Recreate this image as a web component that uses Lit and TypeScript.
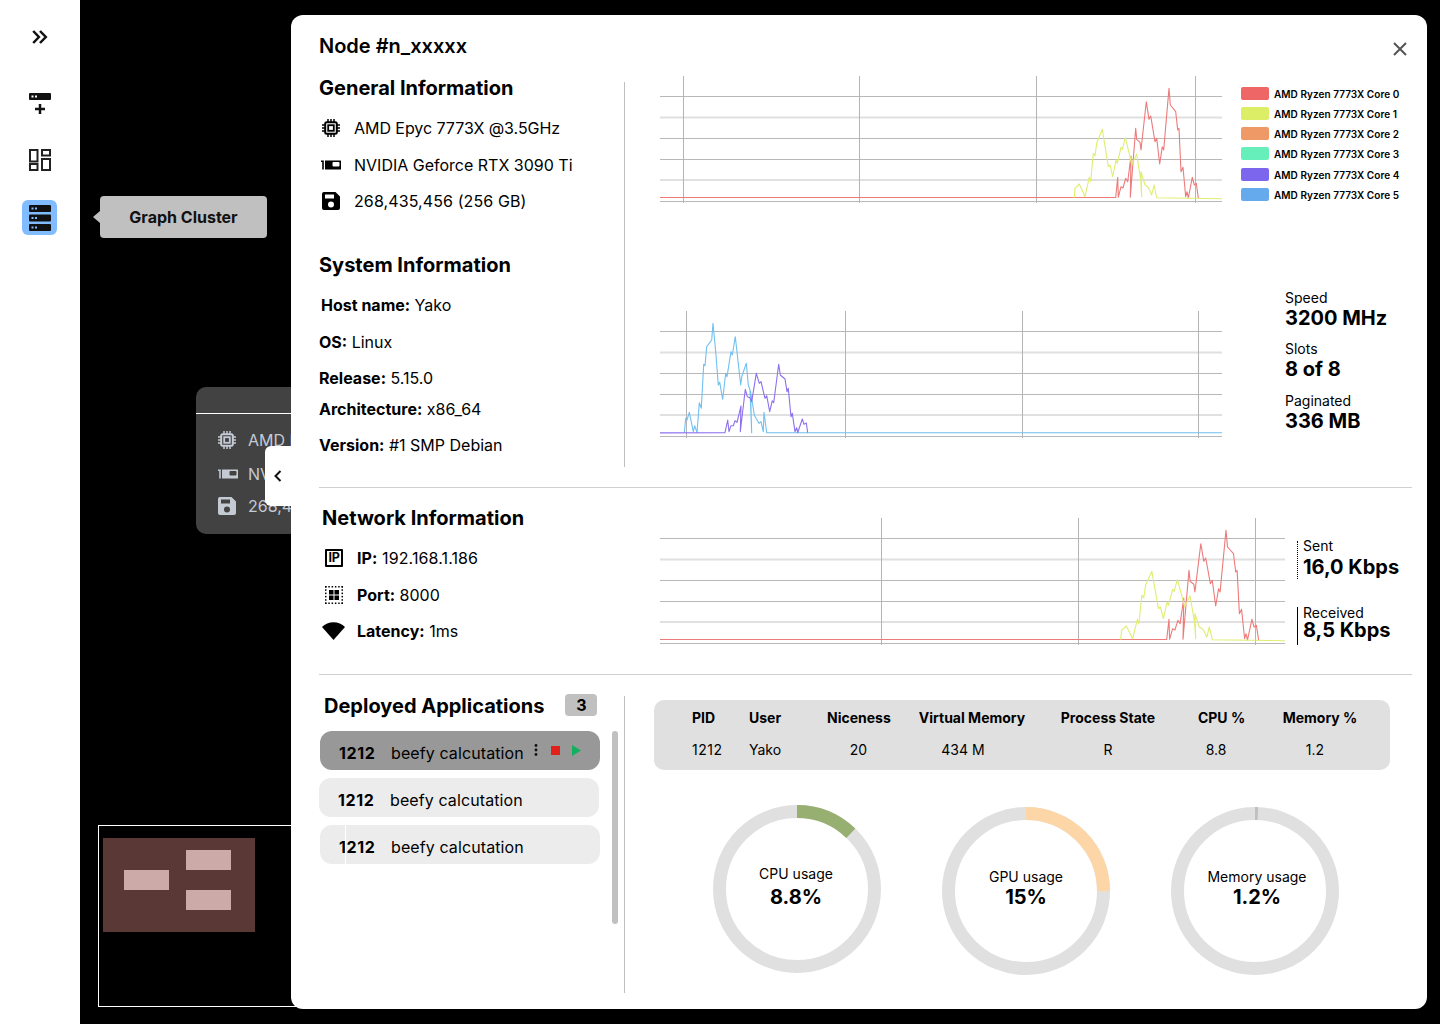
import { LitElement, html, css, svg } from "lit";
import { customElement } from "lit/decorators.js";

type Pt = [number, number];
const RED: Pt[] = [[660,197.5],[1115.7,197.5],[1117.7,177.3],[1118.3,197.3],[1121,186.7],[1123,188],[1125.7,178.3],[1127.7,181.7],[1131,156],[1130.3,197.3],[1135.7,128.3],[1136.7,139.3],[1140,142.3],[1141,150],[1146.3,101.7],[1149,119.3],[1150.7,116],[1155,141.7],[1156.7,138.3],[1159.7,164],[1162.3,146.7],[1163.7,150],[1169,88.3],[1170.3,105],[1175.7,111.7],[1177.7,130],[1179,128.3],[1181,171.7],[1183,167.3],[1185.7,196.7],[1187,191.7],[1188.3,198],[1192.3,177.3],[1194.3,185],[1196.3,183.3],[1198.3,198]];
const YELLOW: Pt[] = [[1074.3,197.7],[1075,188.3],[1079.3,184],[1083.3,192.7],[1085,196.7],[1089.3,177.3],[1090.7,181.7],[1093.3,153.3],[1095,156],[1096.7,143.3],[1102.3,129.3],[1108.3,166.7],[1110,165],[1112.7,176.7],[1116,160],[1117.3,163.3],[1121,147.3],[1122.3,149.3],[1125.3,137.7],[1130,156.7],[1131.7,165],[1136.7,154],[1140.7,180],[1141.7,196.7],[1141,171.7],[1145,185],[1148.3,187.3],[1151.7,195],[1154,185],[1156.7,197.7],[1222,198.7]];
const BLUE: Pt[] = [[684.3,432.7],[685.7,418.3],[687,420],[689.3,412.3],[693.3,431.7],[694.7,425.7],[697,432.7],[699.3,402.7],[701.3,408.3],[703.7,364.3],[705,365.7],[706.7,346.7],[711.7,340],[713,323.3],[715.7,351.7],[718.3,385],[719.7,382.3],[722.7,399.3],[725.7,373.3],[727,376.7],[731,351.7],[732.3,355],[735.3,336.7],[740.7,385],[741.7,376.7],[746.3,363.3],[748.3,385],[750,390],[751.7,432.7],[750.5,391],[754.3,415],[756,418.3],[759,423.3],[761,421.7],[763.3,431.7],[764,412.3],[766.7,432.7],[1222,432.7]];
const PURPLE: Pt[] = [[660,432.9],[725,432.7],[727.7,420],[729,431.7],[731,425.7],[733.3,425.7],[735,420.7],[737,422.3],[741,406],[740.3,431.7],[745.3,389.3],[747.3,396.7],[750,397.7],[751.7,401.7],[756.3,373.3],[759.3,383.3],[761,381.7],[765,398.3],[766.7,395.7],[769.7,411.7],[772.3,400.7],[773.7,402.7],[778.7,364.3],[780.3,375],[785,379],[787,391.7],[788.3,388.3],[791,416.7],[792.3,413.3],[795,431.7],[796.7,427.7],[797.7,432.7],[802.3,419],[804,424.3],[806.3,423],[807.7,432.7]];

interface ChartDef { w: number; vs: number[]; series: { pts: Pt[]; color: string; sx?: number }[] }

const pointsOf = (pts: Pt[], sx: number, yBase: number) =>
  pts.map(([x, y]) => `${((x - 660) * sx).toFixed(1)},${(y - yBase).toFixed(1)}`).join(" ");

function chart(def: ChartDef, yBase: number) {
  const hs = [20.5, 41.5, 62.5, 83.5, 104, 125.5];
  const light = new Set([41.5, 104]);
  return html`<svg class="chart" width=${def.w} height="127" viewBox="0 0 ${def.w} 127">
    ${hs.map(y => svg`<line x1="0" x2=${def.w} y1=${y} y2=${y} stroke=${light.has(y) ? "#e0e0e0" : "#b8b8b8"} stroke-width=${light.has(y) ? 2 : 1}></line>`)}
    ${def.vs.map(x => svg`<line x1=${x} x2=${x} y1="0" y2="127" stroke="#b4b4b4" stroke-width="1"></line>`)}
    ${def.series.map(s => svg`<polyline fill="none" stroke=${s.color} stroke-width="1.1" stroke-linejoin="round" points=${pointsOf(s.pts, s.sx ?? 1, yBase)}></polyline>`)}
  </svg>`;
}

const iconCpu = html`<svg class="ic" width="18" height="18" viewBox="0 0 18 18" fill="none" stroke="currentColor"><rect x="3.2" y="3.2" width="11.6" height="11.6" rx="1.5" stroke-width="2"></rect><rect x="6.2" y="6.2" width="5.6" height="5.6" stroke-width="1.8"></rect><path d="M6 0v3M9 0v3M12 0v3M6 15v3M9 15v3M12 15v3M0 6h3M0 9h3M0 12h3M15 6h3M15 9h3M15 12h3" stroke-width="1.5"></path></svg>`;
const iconGpu = html`<svg class="ic" width="20" height="10" viewBox="0 0 20 10"><path fill="currentColor" fill-rule="evenodd" d="M0 .5h2.800v9H1.200V2H0zM4 .5h15.500a.5.5 0 0 1 .5.5v8.500H4zM12.500 2a1 1 0 0 0-1 1v2.500a1 1 0 0 0 1 1h5a1 1 0 0 0 1-1V3a1 1 0 0 0-1-1z"></path></svg>`;
const iconSave = html`<svg class="ic" width="18" height="18" viewBox="0 0 18 18"><path fill="currentColor" fill-rule="evenodd" d="M2 0h11.500L18 4.500V16a2 2 0 0 1-2 2H2a2 2 0 0 1-2-2V2a2 2 0 0 1 2-2zM3 2.500v4h9v-4zM9 9.500a3 3 0 1 0 0 6 3 3 0 0 0 0-6z"></path></svg>`;
const iconPort = html`<svg width="18" height="18" viewBox="0 0 18 18" fill="#000"><g>
  ${[0,1,2,3,4,5].flatMap(n => { const i = n * 3.3; return [svg`<rect x=${i} y="0" width="1.500" height="1.500"></rect>`, svg`<rect x=${i} y="16.500" width="1.500" height="1.500"></rect>`, svg`<rect x="0" y=${i} width="1.500" height="1.500"></rect>`, svg`<rect x="16.500" y=${i} width="1.500" height="1.500"></rect>`]; })}
  <rect x="4" y="4" width="4.500" height="4.500"></rect><rect x="9.500" y="4" width="4.500" height="4.500"></rect><rect x="4" y="9.500" width="4.500" height="4.500"></rect><rect x="9.500" y="9.500" width="4.500" height="4.500"></rect></g></svg>`;
const iconWifi = html`<svg width="23" height="18" viewBox="0 0 23 18"><path fill="#000" d="M11.500 18 0 5C3 2 7 .3 11.500 .3S20 2 23 5z"></path></svg>`;

const srv = (y: number, fill: string, dot: string) => svg`<rect x="0" y=${y} width="22" height="7" rx="1" fill=${fill}></rect><rect x="2.500" y=${y + 2.500} width="2" height="2" fill=${dot}></rect><rect x="6" y=${y + 2.500} width="2" height="2" fill=${dot}></rect>`;

const LEGEND: [string, string][] = [
  ["#ee6666", "AMD Ryzen 7773X Core 0"], ["#dcee66", "AMD Ryzen 7773X Core 1"], ["#ee9966", "AMD Ryzen 7773X Core 2"],
  ["#66eebb", "AMD Ryzen 7773X Core 3"], ["#7d66ee", "AMD Ryzen 7773X Core 4"], ["#66aaee", "AMD Ryzen 7773X Core 5"],
];

const gauge = (pct: number, color: string) => {
  const r = 77.5, c = 2 * Math.PI * r;
  return html`<svg class="ring" width="168" height="168" viewBox="0 0 168 168">
    <circle cx="84" cy="84" r=${r} fill="none" stroke="#e0e0e0" stroke-width="13"></circle>
    <circle cx="84" cy="84" r=${r} fill="none" stroke=${color} stroke-width="13" stroke-dasharray="${c * pct} ${c}" transform="rotate(-90 84 84)"></circle>
  </svg>`;
};

const RED_Y = 76, BLUE_Y = 311;

@customElement("app-root")
export class AppRoot extends LitElement {
  static styles = css`
    :host { display: flex; width: 1440px; height: 1024px; overflow: hidden; background: #000; font-family: Inter, "Liberation Sans", sans-serif; color: #000; font-size: 16px; line-height: 20px; }
    .side { width: 80px; background: #fff; display: flex; flex-direction: column; align-items: center; flex: none; }
    .sbtn { display: flex; align-items: center; justify-content: center; }
    .s1 { margin-top: 27px; height: 20px; }
    .s2 { margin-top: 46px; height: 22px; }
    .s3 { margin-top: 34px; height: 22px; }
    .s4 { margin-top: 29px; margin-left: -1px; width: 35px; height: 35px; border-radius: 6px; background: #80bcff; padding-left: 1px; box-sizing: border-box; }
    .canvas { position: relative; flex: 1; }
    .tip { position: absolute; left: 20px; top: 196px; width: 167px; height: 42px; background: #c0c0c0; border-radius: 4px; display: flex; align-items: center; justify-content: center; font-weight: 700; color: #111; }
    .tip::before { content: ""; position: absolute; left: -7px; top: 15px; border: 6px solid transparent; border-left: 0; border-right: 7px solid #c0c0c0; }
    .node { position: absolute; left: 116px; top: 387px; width: 110px; height: 147px; background: #424242; border-radius: 10px 0 0 10px; color: #c4cad4; overflow: hidden; }
    .node-head { height: 26px; border-bottom: 1px solid #fff; }
    .node-row { position: absolute; left: 22px; display: flex; align-items: center; white-space: nowrap; }
    .node-row .ico { width: 30px; flex: none; display: flex; align-items: center; }
    .nr1 { top: 43px; } .nr2 { top: 77px; } .nr3 { top: 109px; }
    .mini { position: absolute; left: 18px; top: 825px; width: 300px; height: 182px; border: 1px solid #fff; box-sizing: border-box; }
    .mini-map { position: absolute; left: 4px; top: 12px; width: 152px; height: 94px; background: #5a3836; }
    .blk { position: absolute; width: 45px; height: 20px; background: #ccaaa8; }
    .b1 { left: 83px; top: 12px; } .b2 { left: 21px; top: 32px; } .b3 { left: 83px; top: 52px; }

    .modal { position: absolute; left: 211px; top: 15px; width: 1136px; height: 994px; background: #fff; border-radius: 12px; box-sizing: border-box; padding: 19px 15px 0 28px; }
    .tab { position: absolute; left: -26px; top: 431px; width: 26px; height: 60px; background: #fff; border-radius: 6px 0 0 6px; display: flex; align-items: center; justify-content: center; }
    .close { position: absolute; left: 1101px; top: 26px; }
    h1 { margin: 0; font-size: 20px; line-height: 24px; font-weight: 600; }
    h2 { margin: 0; font-size: 20px; line-height: 24px; font-weight: 700; }
    .top { display: flex; margin-top: 18px; height: 391px; }
    .left { width: 305px; height: 385px; margin-top: 6px; border-right: 1px solid #c0c0c0; flex: none; }
    .left h2.first { margin-top: -6px; }
    .row { display: flex; align-items: center; height: 20px; white-space: pre; }
    .iconbox { width: 35px; flex: none; display: flex; align-items: center; box-sizing: border-box; padding-left: 3px; }
    .iconbox.gpu { padding-left: 2px; }
    .m18 { margin-top: 18px; } .m17 { margin-top: 17px; } .m16 { margin-top: 16px; } .m11 { margin-top: 11px; } .m42 { margin-top: 42px; }
    .ind { margin-left: 2px; }
    .ls { letter-spacing: .1px; }
    .lsn { letter-spacing: -.05px; }
    b { font-weight: 700; }
    .right { margin-left: 35px; display: flex; flex-direction: column; }
    .crow { display: flex; }
    .chart { display: block; flex: none; }
    .legend { margin-left: 19px; margin-top: 11px; display: flex; flex-direction: column; gap: 7px; }
    .lg { display: flex; align-items: center; gap: 5px; height: 13px; font-size: 10px; line-height: 13px; font-weight: 600; white-space: nowrap; letter-spacing: .05px; }
    .lg:nth-child(5) { margin-top: 1px; }
    .lgt { padding-top: 1px; }
    .sw { width: 28px; height: 13px; border-radius: 2px; }
    .crow2 { margin-top: 85px; }
    .crow2 .chart { margin-top: 23px; }
    .stats { margin-left: 63px; }
    .lab { font-size: 14px; line-height: 20px; }
    .val { font-size: 20px; line-height: 20px; font-weight: 700; }
    .sg1 { margin-top: 11px; } .sg2 { margin-top: 12px; }
    .hr { height: 1px; background: #d0d0d0; margin-top: 20px; }
    .net { display: flex; height: 186px; padding-left: 3px; box-sizing: border-box; }
    .hr2 { height: 1px; background: #d0d0d0; margin-top: 0; }
    .net-left { width: 338px; flex: none; padding-top: 18px; }
    .net-left .iconbox.wide { padding-left: 0; }
    .ipbox { width: 18px; height: 18px; border: 2px solid #000; box-sizing: border-box; border-radius: 1px; font-size: 12.500px; line-height: 14px; font-weight: 700; text-align: center; letter-spacing: -.4px; }
    .net-chart { padding-top: 30px; }
    .net-stats { margin-left: 12px; padding-top: 53px; }
    .st { width: 110px; padding-left: 5px; height: 38px; white-space: nowrap; }
    .st-a { border-left: 1px dotted #000; }
    .st-b { border-left: 1px solid #000; margin-top: 28px; }
    .st-a .lab { line-height: 10px; }
    .st-a .val { line-height: 24px; margin-top: 4px; }
    .st-b .lab { line-height: 12px; }
    .st-b .val { line-height: 22px; }
    .bottom { display: flex; height: 334px; }
    .apps { width: 305px; height: 297px; margin-top: 21px; border-right: 1px solid #c0c0c0; flex: none; position: relative; }
    .apps-head { display: flex; margin-left: 5px; margin-top: -2px; }
    .badge { width: 32px; height: 22px; margin-left: 21px; background: #c0c0c0; border-radius: 4px; font-weight: 700; line-height: 22px; text-align: center; }
    .list { margin-top: 13px; display: flex; flex-direction: column; gap: 8px; width: 281px; }
    .app { height: 39px; width: 280px; margin-left: 1px; border-radius: 12px; background: #ececec; display: flex; align-items: center; box-sizing: border-box; padding: 4px 0 0 19px; position: relative; white-space: nowrap; }
    .app.sel { background: #989898; }
    .app.shift { margin-left: 0; }
    .app b { width: 52px; flex: none; letter-spacing: .6px; }
    .app .t { letter-spacing: .1px; }
    .kebab { margin: -4px 0 0 10px; display: flex; align-items: center; }
    .slit { position: absolute; left: 25px; top: 0; width: 1px; height: 39px; background: #fff; }
    .scroll { position: absolute; left: 293px; top: 35px; width: 6px; height: 193px; background: #c0c0c0; border-radius: 3px; }
    .proc { margin-left: 29px; flex: 1; }
    .table { width: 736px; height: 70px; margin-top: 25px; background: #e0e0e0; border-radius: 10px; box-sizing: border-box; padding: 8px 0 0 38px; display: grid; grid-template-columns: 57px 78px 63px 164px 108px 119px 78px; grid-auto-rows: 20px; row-gap: 12px; font-size: 14px; white-space: nowrap; }
    .th { font-weight: 700; }
    .c { text-align: center; }
    .pid { letter-spacing: .5px; }
    .o1 { padding-right: 18px; } .o2 { padding-right: 11px; } .o3 { padding-right: 10px; }
    .gauges { display: flex; margin-left: 59px; gap: 61px; align-items: flex-start; }
    .g { position: relative; width: 168px; height: 168px; }
    .ring { display: block; }
    .g1 { margin-top: 35px; } .g2 { margin-top: 37px; } .g3 { margin-top: 37px; }
    .gt { position: absolute; left: 0; right: 0; text-align: center; }
    .g1 .gt { top: 59px; left: -1px; right: 1px; }
    .g2 .gt { top: 60px; }
    .g3 .gt { top: 60px; left: 2px; right: -2px; }
    .gt .lab { line-height: 20px; }
    .g1 .val { line-height: 26px; }
    .g2 .val, .g3 .val { line-height: 20px; }
  `;

  render() {
    const c1: ChartDef = { w: 562, vs: [23.5, 199.5, 376.5, 535.5], series: [
      { pts: RED, color: "#ee7a7a" }, { pts: YELLOW, color: "#dfee70" } ] };
    const c2: ChartDef = { w: 562, vs: [26.5, 185.5, 362.5, 538.5], series: [
      { pts: BLUE, color: "#70c0f0" }, { pts: PURPLE, color: "#8d70ee" } ] };
    const c3: ChartDef = { w: 625, vs: [221.5, 418.5, 595.5], series: [
      { pts: RED, color: "#ee7a7a", sx: 1.112 }, { pts: YELLOW, color: "#dfee70", sx: 1.112 } ] };

    return html`
      <nav class="side">
        <div class="sbtn s1"><svg width="16" height="14" viewBox="0 0 16 14" fill="none" stroke="#111" stroke-width="2.500"><path d="M1.200 1l5.700 6-5.700 6M8 1l5.800 6L8 13"></path></svg></div>
        <div class="sbtn s2"><svg width="22" height="22" viewBox="0 0 22 22">${srv(0, "#111", "#fff")}<path d="M11 11v10M6 16h10" stroke="#111" stroke-width="2.500" fill="none"></path></svg></div>
        <div class="sbtn s3"><svg width="22" height="22" viewBox="0 0 22 22" fill="none" stroke="#222" stroke-width="2"><rect x="1" y="1" width="7.500" height="11.500"></rect><rect x="13" y="1" width="8" height="5.500"></rect><rect x="1" y="15" width="7.500" height="6"></rect><rect x="13" y="10" width="8" height="11"></rect></svg></div>
        <div class="sbtn s4"><svg width="22" height="26" viewBox="0 0 22 26">${srv(0, "#111", "#80bcff")}${srv(9.500, "#111", "#80bcff")}${srv(19, "#111", "#80bcff")}</svg></div>
      </nav>
      <main class="canvas">
        <div class="tip">Graph Cluster</div>
        <div class="node">
          <div class="node-head"></div>
          <div class="node-row nr1"><span class="ico">${iconCpu}</span><span>AMD E</span></div>
          <div class="node-row nr2"><span class="ico">${iconGpu}</span><span>NVI</span></div>
          <div class="node-row nr3"><span class="ico">${iconSave}</span><span>268,4</span></div>
        </div>
        <div class="mini"><div class="mini-map"><div class="blk b1"></div><div class="blk b2"></div><div class="blk b3"></div></div></div>

        <section class="modal">
          <div class="tab"><svg width="8" height="12" viewBox="0 0 8 12" fill="none" stroke="#111" stroke-width="2"><path d="M6.500 1 1.500 6l5 5"></path></svg></div>
          <svg class="close" width="16" height="16" viewBox="0 0 16 16" fill="none" stroke="#555" stroke-width="2"><path d="M2 2l12 12M14 2 2 14"></path></svg>
          <h1>Node #n_xxxxx</h1>
          <div class="top">
            <div class="left">
              <h2 class="first">General Information</h2>
              <div class="row m18 lsn"><span class="iconbox">${iconCpu}</span>AMD Epyc 7773X @3.5GHz</div>
              <div class="row m17"><span class="iconbox gpu">${iconGpu}</span>NVIDIA Geforce RTX 3090 Ti</div>
              <div class="row m16 ls"><span class="iconbox">${iconSave}</span>268,435,456 (256 GB)</div>
              <h2 class="m42">System Information</h2>
              <div class="row m18 ind"><b>Host name:</b> Yako</div>
              <div class="row m17"><b>OS:</b> Linux</div>
              <div class="row m16"><b>Release:</b> 5.15.0</div>
              <div class="row m11"><b>Architecture:</b> x86_64</div>
              <div class="row m16"><b>Version:</b> #1 SMP Debian</div>
            </div>
            <div class="right">
              <div class="crow">
                ${chart(c1, RED_Y)}
                <div class="legend">${LEGEND.map(([c, t]) => html`<div class="lg"><span class="sw" style="background:${c}"></span><span class="lgt">${t}</span></div>`)}</div>
              </div>
              <div class="crow crow2">
                ${chart(c2, BLUE_Y)}
                <div class="stats">
                  <div class="lab">Speed</div><div class="val">3200 MHz</div>
                  <div class="lab sg1">Slots</div><div class="val">8 of 8</div>
                  <div class="lab sg2">Paginated</div><div class="val">336 MB</div>
                </div>
              </div>
            </div>
          </div>
          <div class="hr"></div>
          <div class="net">
            <div class="net-left">
              <h2>Network Information</h2>
              <div class="row m18 ls"><span class="iconbox"><span class="ipbox">IP</span></span><b>IP:</b> 192.168.1.186</div>
              <div class="row m17"><span class="iconbox">${iconPort}</span><b>Port:</b> 8000</div>
              <div class="row m16"><span class="iconbox wide">${iconWifi}</span><b>Latency:</b> 1ms</div>
            </div>
            <div class="net-chart">${chart(c3, RED_Y)}</div>
            <div class="net-stats">
              <div class="st st-a"><div class="lab">Sent</div><div class="val">16,0 Kbps</div></div>
              <div class="st st-b"><div class="lab">Received</div><div class="val">8,5 Kbps</div></div>
            </div>
          </div>
          <div class="hr2"></div>
          <div class="bottom">
            <div class="apps">
              <div class="apps-head"><h2>Deployed Applications</h2><span class="badge">3</span></div>
              <div class="list">
                <div class="app sel"><b>1212</b><span class="t">beefy calcutation</span>
                  <span class="kebab"><svg width="48" height="15" viewBox="0 0 48 15"><circle cx="2" cy="2.500" r="1.400" fill="#111"></circle><circle cx="2" cy="7" r="1.400" fill="#111"></circle><circle cx="2" cy="11.500" r="1.400" fill="#111"></circle><rect x="17" y="3" width="9" height="9" fill="#e0201a"></rect><path d="M38 2l9 5.500-9 5.500z" fill="#14b060"></path></svg></span>
                </div>
                <div class="app shift"><b>1212</b><span class="t">beefy calcutation</span></div>
                <div class="app"><span class="slit"></span><b>1212</b><span class="t">beefy calcutation</span></div>
              </div>
              <div class="scroll"></div>
            </div>
            <div class="proc">
              <div class="table">
                <div class="th">PID</div><div class="th">User</div><div class="th c">Niceness</div><div class="th c">Virtual Memory</div><div class="th c">Process State</div><div class="th c">CPU %</div><div class="th c">Memory %</div>
                <div class="pid">1212</div><div>Yako</div><div class="c">20</div><div class="c o1">434 M</div><div class="c">R</div><div class="c o2">8.8</div><div class="c o3">1.2</div>
              </div>
              <div class="gauges">
                <div class="g g1">${gauge(0.122, "#97b071")}<div class="gt"><div class="lab">CPU usage</div><div class="val">8.8%</div></div></div>
                <div class="g g2">${gauge(0.25, "#fdd6a8")}<div class="gt"><div class="lab">GPU usage</div><div class="val">15%</div></div></div>
                <div class="g g3">${gauge(0.006, "#c0c0c0")}<div class="gt"><div class="lab">Memory usage</div><div class="val">1.2%</div></div></div>
              </div>
            </div>
          </div>
        </section>
      </main>
    `;
  }
}
